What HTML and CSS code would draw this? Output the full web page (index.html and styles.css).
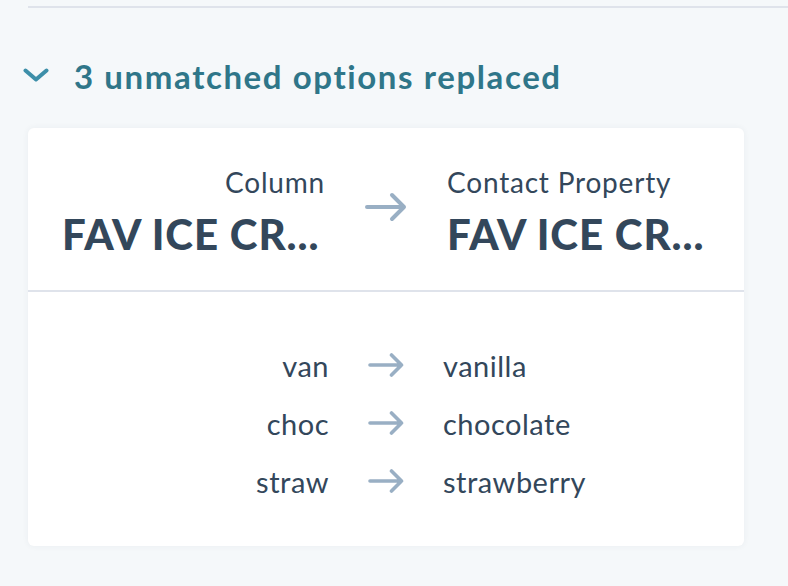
FILE: index.html
```html
<!DOCTYPE html>
<html>
<head>
<meta charset="utf-8">
<link rel="stylesheet" href="styles.css">
</head>
<body>
<div class="rule"></div>
<div class="toggle">
  <svg class="chev" width="26" height="14" viewBox="0 0 26 14"><path d="M2.5 2.5 L13 11.5 L23.5 2.5" fill="none" stroke="#3d8fa9" stroke-width="4" stroke-linecap="round" stroke-linejoin="round"/></svg>
  <span class="toggle-text">3 unmatched options replaced</span>
</div>
<div class="card">
  <div class="head">
    <div class="col left">
      <div class="label">Column</div>
      <div class="name">FAV ICE CR...</div>
    </div>
    <svg class="big-arrow" width="42" height="30" viewBox="0 0 42 30"><path d="M2 15 H39 M27 3 L39 15 L27 27" fill="none" stroke="#99afc4" stroke-width="4" stroke-linecap="round" stroke-linejoin="round"/></svg>
    <div class="col right">
      <div class="label">Contact Property</div>
      <div class="name">FAV ICE CR...</div>
    </div>
  </div>
  <div class="rows">
    <div class="from">van</div>
    <svg class="arrow" width="36" height="24" viewBox="0 0 36 24"><path d="M2 12 H33.5 M23.5 2 L33.5 12 L23.5 22" fill="none" stroke="#99afc4" stroke-width="3.6" stroke-linecap="round" stroke-linejoin="round"/></svg>
    <div class="to">vanilla</div>
    <div class="from">choc</div>
    <svg class="arrow" width="36" height="24" viewBox="0 0 36 24"><path d="M2 12 H33.5 M23.5 2 L33.5 12 L23.5 22" fill="none" stroke="#99afc4" stroke-width="3.6" stroke-linecap="round" stroke-linejoin="round"/></svg>
    <div class="to">chocolate</div>
    <div class="from">straw</div>
    <svg class="arrow" width="36" height="24" viewBox="0 0 36 24"><path d="M2 12 H33.5 M23.5 2 L33.5 12 L23.5 22" fill="none" stroke="#99afc4" stroke-width="3.6" stroke-linecap="round" stroke-linejoin="round"/></svg>
    <div class="to">strawberry</div>
  </div>
</div>
</body>
</html>
```
FILE: styles.css
```css
html, body {
  margin: 0;
  padding: 0;
  background: #f5f8fa;
  font-family: "Lato", "Liberation Sans", sans-serif;
  color: #33475b;
}
body {
  width: 788px;
  height: 586px;
  overflow: hidden;
}
.rule {
  margin: 6px 0 0 28px;
  height: 2px;
  background: #dfe3eb;
}
.toggle {
  display: flex;
  align-items: center;
  margin-top: 48px;
  padding-left: 23px;
  height: 40px;
}
.chev {
  display: block;
  margin-right: 25px;
  margin-top: -2px;
}
.toggle-text {
  font-size: 33px;
  font-weight: 700;
  color: #2f7689;
  line-height: 40px;
  letter-spacing: 1.6px;
}
.card {
  margin: 32px 0 0 28px;
  width: 716px;
  height: 418px;
  background: #fff;
  border-radius: 6px;
  box-shadow: 0 0 6px rgba(45, 62, 80, 0.06);
  display: flex;
  flex-direction: column;
}
.head {
  display: grid;
  grid-template-columns: 1fr 42px 1fr;
  column-gap: 40px;
  padding: 4px 34px 0;
  height: 158px;
  align-items: center;
  border-bottom: 2px solid #dfe3eb;
}
.col {
  min-width: 0;
}
.left {
  text-align: right;
}
.left .name {
  text-align: left;
}
.label {
  font-size: 28px;
  line-height: 32px;
  letter-spacing: 0.8px;
  color: #33475b;
}
.name {
  font-size: 42px;
  font-weight: 900;
  line-height: 46px;
  white-space: nowrap;
  color: #33475b;
  margin-top: 13px;
  letter-spacing: 0.9px;
}
.big-arrow {
  display: block;
  margin-top: -8px;
}
.rows {
  display: grid;
  grid-template-columns: 1fr 36px 1fr;
  column-gap: 39px;
  padding: 44px 34px 0;
  grid-auto-rows: 58px;
  align-items: center;
}
.from {
  text-align: right;
  font-size: 29px;
  letter-spacing: 0.5px;
}
.to {
  font-size: 29px;
  letter-spacing: 0.5px;
}
.arrow {
  display: block;
}
```
